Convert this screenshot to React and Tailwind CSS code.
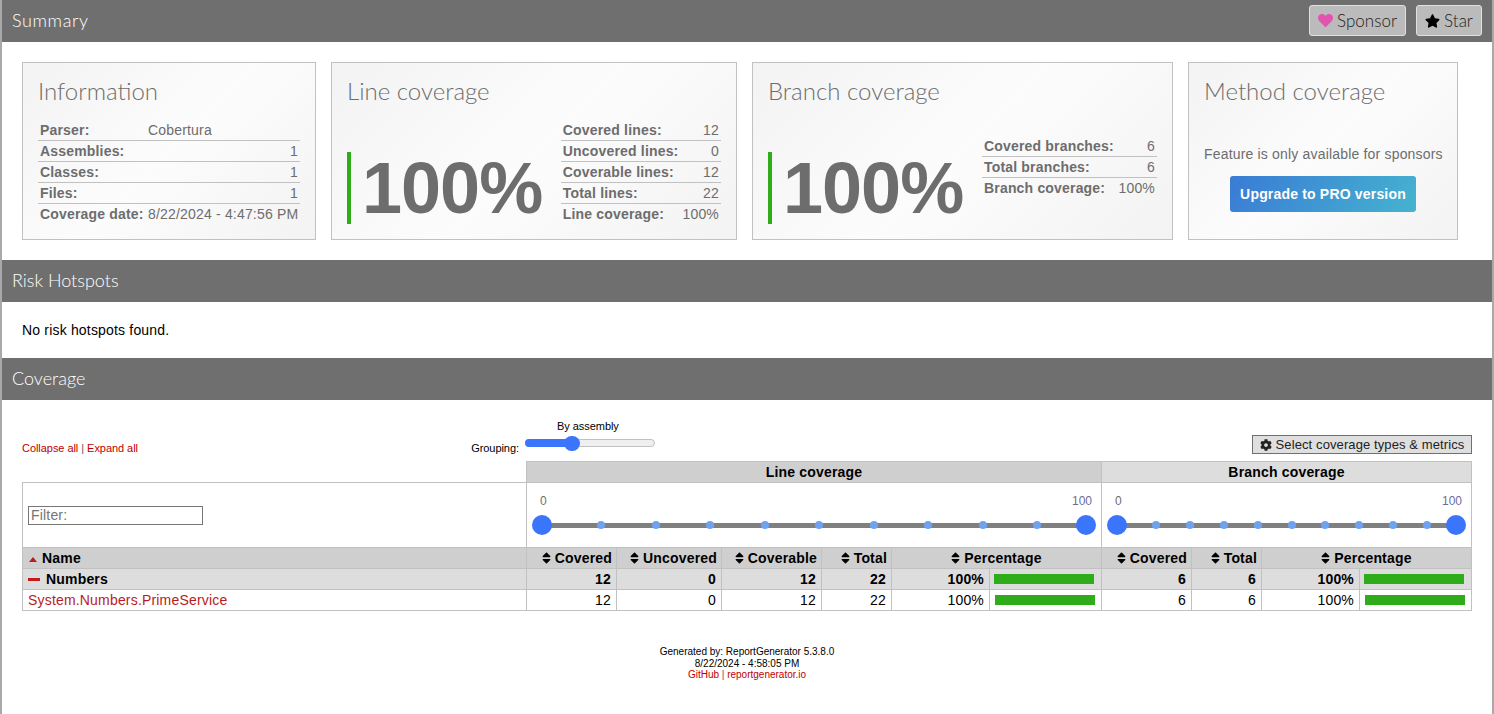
import { FaHeart, FaStar, FaCog, FaSort } from 'react-icons/fa';

const arial = { fontFamily: '"Liberation Sans", Arial, sans-serif' };

const SectionHeader = ({ title, titleClass = '', children }) => (
  <div className="flex h-[42px] items-center justify-between bg-[#6f6f6f] pb-[1px] pl-2.5 pr-2.5 font-['Lato',sans-serif] text-[18px] font-light leading-[24px] tracking-normal text-white">
    <span className={`mb-[1px] ${titleClass}`}>{title}</span>
    {children}
  </div>
);

const HeaderButton = ({ icon, label, width }) => (
  <span className={`flex h-[31px] ${width} items-center justify-center gap-1 rounded-[3px] border border-[#e0e0e0] bg-[#bbbbbb] text-[17px] text-[#222222]`}>
    {icon}
    {label}
  </span>
);

const Card = ({ title, titleClass = '', width, children }) => (
  <div className={`${width} flex h-[178px] flex-col border border-[#c1c1c1] bg-[linear-gradient(135deg,#f3f3f3,#fcfcfc_50%,#f3f3f3)] px-[15px] pb-[14px] pt-[13px] text-[14px] text-[#6d6d6d]`}>
    <h2 className={`h-[30px] font-['Lato',sans-serif] text-[24px] font-light leading-[30px] tracking-normal text-[#6d6d6d] ${titleClass}`}>{title}</h2>
    {children}
  </div>
);

const StatTable = ({ rows, className }) => (
  <table className={`border-collapse ${className}`}>
    <tbody>
      {rows.map(([label, value], i) => (
        <tr key={label} className={i < rows.length - 1 ? 'border-b border-[#c1c1c1]' : ''}>
          <th className={`h-[21px] whitespace-nowrap p-0 pl-[2px] pr-1 text-left font-bold ${i === 0 ? 'pt-[2px]' : ''}`}>{label}</th>
          <td className={`h-[21px] whitespace-nowrap p-0 pr-[2px] text-right ${i === 0 ? 'pt-[2px]' : ''}`}>{value}</td>
        </tr>
      ))}
    </tbody>
  </table>
);

const BigPercent = () => (
  <div className="h-[72px] border-l-4 border-[#2fac1a] pl-[11px] text-[72px] font-bold leading-[72px] tracking-[-1px] text-[#6d6d6d]">100%</div>
);

const RangeSlider = ({ ticksClass }) => (
  <div className="px-[5px] pt-[11px]">
    <div className="flex justify-between pl-[8px] pr-[4px] text-[12px] leading-[14px] tracking-normal text-[#6c6c98]">
      <span className="text-[#6d6d6d]">0</span>
      <span>100</span>
    </div>
    <div className="relative mt-[7px] flex h-[20px] items-center">
      <div className="absolute inset-x-[10px] top-[8px] h-[5px] bg-[#808080]" />
      <span className="relative h-[20px] w-[20px] shrink-0 rounded-full bg-[#3b75fb]" />
      <div className={`relative flex flex-1 items-center justify-between ${ticksClass}`}>
        {Array.from({ length: 9 }).map((_, i) => (
          <span key={i} className="h-[8px] w-[8px] rounded-full bg-[#6ea3f2]" />
        ))}
      </div>
      <span className="relative h-[20px] w-[20px] shrink-0 rounded-full bg-[#3b75fb]" />
    </div>
  </div>
);

const SortHead = ({ label, colSpan, center }) => (
  <th colSpan={colSpan} className={`h-[21px] whitespace-nowrap border border-[#c1c1c1] bg-[#cfcfcf] px-[4px] py-0 font-bold ${center ? 'text-center' : 'text-right'}`}>
    <FaSort className="mr-[4px] inline-block h-[14px] w-[9px] align-[-2px]" />
    {label}
  </th>
);

const Bar = () => <div className="h-[10px] w-[100px] bg-[#2fac1a]" />;

const Row = ({ cells, bold, bg }) =>
  cells.map((value, i) => (
    <td key={i} className={`h-[21px] border border-[#c1c1c1] px-[5px] py-0 text-right ${bg} ${bold ? 'font-bold' : ''}`}>
      {value}
    </td>
  ));

export default function App() {
  return (
    <div style={arial} className="min-h-[714px] border-x-2 border-[#a9a9a9] bg-white text-[14px] leading-[16px] tracking-[0.18px] text-black">
      <SectionHeader title="Summary" titleClass="tracking-[0.6px]">
        <div className="flex gap-2.5">
          <HeaderButton width="w-[97px]" label="Sponsor" icon={<FaHeart className="h-[15px] w-[15px] text-[#e254b0]" />} />
          <HeaderButton width="w-[66px]" label="Star" icon={<FaStar className="h-[14px] w-[15px] text-black" />} />
        </div>
      </SectionHeader>

      <div className="flex gap-[15px] px-5 py-5">
        <Card title="Information" width="w-[294px]">
          <table className="mt-[13px] w-[262px] border-collapse">
            <tbody>
              <tr className="border-b border-[#c1c1c1]">
                <th className="h-[21px] w-[110px] p-0 pl-[2px] pt-[2px] text-left font-bold">Parser:</th>
                <td className="h-[21px] p-0 pt-[2px]">Cobertura</td>
              </tr>
              {['Assemblies:', 'Classes:', 'Files:'].map((label) => (
                <tr key={label} className="border-b border-[#c1c1c1]">
                  <th className="h-[21px] p-0 pl-[2px] text-left font-bold">{label}</th>
                  <td className="h-[21px] p-0 pr-[2px] text-right">1</td>
                </tr>
              ))}
              <tr>
                <th className="h-[21px] whitespace-nowrap p-0 pl-[2px] text-left font-bold">Coverage date:</th>
                <td className="h-[21px] whitespace-nowrap p-0">8/22/2024 - 4:47:56 PM</td>
              </tr>
            </tbody>
          </table>
        </Card>

        <Card title="Line coverage" titleClass="tracking-[0.7px]" width="w-[406px]">
          <div className="mt-[13px] flex items-end justify-between">
            <BigPercent />
            <StatTable
              className="w-[160px]"
              rows={[
                ['Covered lines:', '12'],
                ['Uncovered lines:', '0'],
                ['Coverable lines:', '12'],
                ['Total lines:', '22'],
                ['Line coverage:', '100%'],
              ]}
            />
          </div>
        </Card>

        <Card title="Branch coverage" titleClass="tracking-[0.7px]" width="w-[421px]">
          <div className="mt-[13px] flex h-[105px] items-end justify-between">
            <BigPercent />
            <StatTable
              className="mb-[26px] w-[175px]"
              rows={[
                ['Covered branches:', '6'],
                ['Total branches:', '6'],
                ['Branch coverage:', '100%'],
              ]}
            />
          </div>
        </Card>

        <Card title="Method coverage" titleClass="tracking-[0.7px]" width="w-[270px]">
          <p className="mt-[38px] whitespace-nowrap text-[14px] leading-[20px]">Feature is only available for sponsors</p>
          <span className="mx-auto mt-[12px] flex h-[36px] w-[186px] items-center justify-center rounded-[3px] bg-[linear-gradient(120deg,#3a7bd5,#45b3cf)] font-bold text-white">
            Upgrade to PRO version
          </span>
        </Card>
      </div>

      <SectionHeader title="Risk Hotspots" />
      <p className="px-5 py-5 leading-[16px]">No risk hotspots found.</p>

      <SectionHeader title="Coverage" />
      <div className="px-5">
        <div className="flex h-[61px] items-end">
          <div className="flex w-[503px] items-end justify-between pb-[7px] text-[11px] leading-[12px] tracking-[-0.05px]">
            <span className="text-[#c00000]">
              Collapse all <span className="text-[#555555]">|</span> Expand all
            </span>
            <span className="pr-[6px]">Grouping:</span>
          </div>
          <div className="mb-[14px] w-[130px]">
            <p className="pb-[7px] pl-[32px] text-[11px] leading-[12px] tracking-[-0.05px]">By assembly</p>
            <div className="relative h-[8px] rounded-full border border-[#c1c1c1] bg-[#efefef]">
              <div className="absolute -left-px -top-px h-[8px] w-[46px] rounded-full bg-[#3b75fb]" />
              <span className="absolute left-[38px] -top-[4px] h-[15px] w-[16px] rounded-full bg-[#3b75fb]" />
            </div>
          </div>
          <span className="mb-[7px] ml-auto flex h-[19px] w-[220px] items-center justify-center gap-[4px] whitespace-nowrap border border-[#707070] bg-[#dfdfdf] text-[13px] tracking-[0.1px] text-[#222222]">
            <FaCog className="h-[12px] w-[12px]" />
            Select coverage types &amp; metrics
          </span>
        </div>

        <table className="w-[1450px] table-fixed border-collapse">
          <colgroup>
            {[504, 90, 105, 100, 70, 98, 112, 90, 70, 98, 112].map((w, i) => (
              <col key={i} style={{ width: w }} />
            ))}
          </colgroup>
          <thead>
            <tr>
              <th className="border-b border-[#c1c1c1] p-0" />
              <th colSpan={6} className="h-[21px] border border-[#c1c1c1] bg-[#cfcfcf] p-0 font-bold">Line coverage</th>
              <th colSpan={4} className="h-[21px] border border-[#c1c1c1] bg-[#dddddd] p-0 font-bold">Branch coverage</th>
            </tr>
            <tr>
              <td className="border border-[#c1c1c1] px-[5px] py-0">
                <input
                  placeholder="Filter:"
                  className="block h-[19px] w-[175px] border border-[#767676] px-[2px] text-[14px] placeholder:text-[#757575]"
                  style={arial}
                />
              </td>
              <td colSpan={6} className="h-[65px] border border-[#c1c1c1] p-0 align-top"><RangeSlider ticksClass="pl-[45px] pr-[35px]" /></td>
              <td colSpan={4} className="h-[65px] border border-[#c1c1c1] p-0 align-top"><RangeSlider ticksClass="pl-[25px] pr-[15px]" /></td>
            </tr>
            <tr>
              <th className="h-[21px] border border-[#c1c1c1] bg-[#cfcfcf] py-0 pl-[6px] text-left font-bold">
                <span className="mr-[5px] inline-block h-0 w-0 border-x-[4px] border-b-[5px] border-x-transparent border-b-[#b81c1c] align-[1px]" />
                Name
              </th>
              <SortHead label="Covered" />
              <SortHead label="Uncovered" />
              <SortHead label="Coverable" />
              <SortHead label="Total" />
              <SortHead label="Percentage" colSpan={2} center />
              <SortHead label="Covered" />
              <SortHead label="Total" />
              <SortHead label="Percentage" colSpan={2} center />
            </tr>
          </thead>
          <tbody>
            <tr>
              <td className="h-[21px] border border-[#c1c1c1] bg-[#dddddd] py-0 pl-[5px] font-bold">
                <span className="mr-[6px] inline-block h-[3px] w-[12px] bg-[#c11b1b] align-[3px]" />
                Numbers
              </td>
              <Row bold bg="bg-[#dddddd]" cells={['12', '0', '12', '22', '100%']} />
              <td className="border border-[#c1c1c1] bg-[#dddddd] px-[4px] py-0"><Bar /></td>
              <Row bold bg="bg-[#dddddd]" cells={['6', '6', '100%']} />
              <td className="border border-[#c1c1c1] bg-[#dddddd] px-[4px] py-0"><Bar /></td>
            </tr>
            <tr>
              <td className="h-[21px] border border-[#c1c1c1] py-0 pl-[5px] text-[#b81c1c]">System.Numbers.PrimeService</td>
              <Row cells={['12', '0', '12', '22', '100%']} />
              <td className="border border-[#c1c1c1] px-[5px] py-0"><Bar /></td>
              <Row cells={['6', '6', '100%']} />
              <td className="border border-[#c1c1c1] px-[5px] py-0"><Bar /></td>
            </tr>
          </tbody>
        </table>

        <div className="pt-[35px] text-center text-[10px] leading-[11.5px] tracking-normal">
          <p>Generated by: ReportGenerator 5.3.8.0</p>
          <p>8/22/2024 - 4:58:05 PM</p>
          <p className="text-[#c00000]">
            GitHub <span className="text-[#555555]">|</span> reportgenerator.io
          </p>
        </div>
      </div>
    </div>
  );
}
